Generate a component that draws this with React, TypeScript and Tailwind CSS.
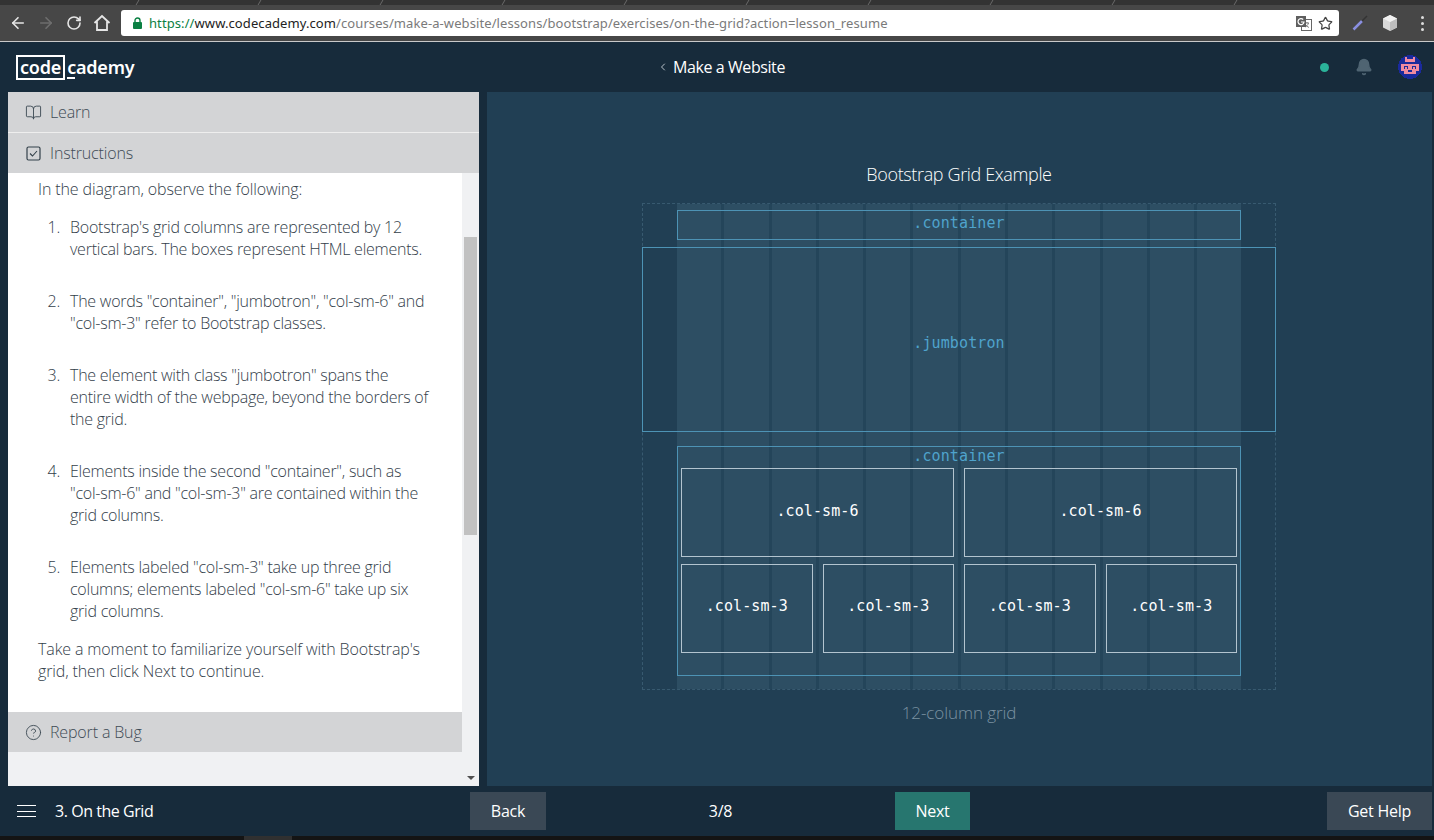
import { ArrowLeft, ArrowRight, RotateCw, Star, Bell, BookOpen, CircleHelp, ChevronLeft } from "lucide-react";

const items = [
  ['Bootstrap\'s grid columns are represented by 12', 'vertical bars. The boxes represent HTML elements.'],
  ['The words "container", "jumbotron", "col-sm-6" and', '"col-sm-3" refer to Bootstrap classes.'],
  ['The element with class "jumbotron" spans the', 'entire width of the webpage, beyond the borders of', 'the grid.'],
  ['Elements inside the second "container", such as', '"col-sm-6" and "col-sm-3" are contained within the', 'grid columns.'],
  ['Elements labeled "col-sm-3" take up three grid', 'columns; elements labeled "col-sm-6" take up six', 'grid columns.'],
];

function Invader() {
  return (
    <svg width="24" height="24" viewBox="0 0 24 24" shapeRendering="crispEdges">
      <circle cx="12" cy="12" r="12" fill="#1a2a9c" />
      <path fill="#f08aa0" d="M7 2h2v2h6V2h2v5H7z M3 9h18v7h-3v3H6v-3H3z" />
      <path fill="#1a2a9c" d="M6 11h4v3H6z M14 11h4v3h-4z M10 15h4v2h-4z" />
      <path fill="#f08aa0" d="M7 12h2v2H7z M15 12h2v2h-2z" />
    </svg>
  );
}

function Cube() {
  return (
    <svg width="18" height="18" viewBox="0 0 18 18">
      <path d="M9 1l7 3.5v9L9 17l-7-3.5v-9z" fill="#d8d8d8" />
      <path d="M9 8l7-3.5v9L9 17z" fill="#bdbdbd" />
      <path d="M9 1l7 3.5L9 8 2 4.5z" fill="#f1f1f1" />
    </svg>
  );
}

function Translate() {
  return (
    <svg width="16" height="15" viewBox="0 0 16 15" className="ml-auto">
      <rect x="5.5" y="3.5" width="10" height="11" fill="#fff" stroke="#666" />
      <path d="M9 7h4M11 6v1M12.5 7c-.5 2-2 3.5-3.5 4M9.5 8.5c.8 1.4 2 2.4 3.5 3" stroke="#666" fill="none" strokeWidth="0.8" />
      <rect x="0" y="0" width="10" height="11" fill="#5f5f5f" />
      <path d="M7.2 3.5A3 3 0 1 0 8 6H5" stroke="#fff" fill="none" strokeWidth="1.2" />
    </svg>
  );
}

function Col6() {
  return (
    <div className="h-[89px] border border-[#b3c4cf] flex items-center justify-center text-white text-[15px] tracking-[0.1px] pb-[3px]">.col-sm-6</div>
  );
}

function Col3() {
  return (
    <div className="h-[89px] border border-[#b3c4cf] flex items-center justify-center text-white text-[15px] tracking-[0.1px] pb-[5px]">.col-sm-3</div>
  );
}

export default function App() {
  return (
    <div className="w-[1434px] h-[840px] overflow-hidden flex flex-col bg-[#172b3b] text-white" style={{ fontFamily: '"Open Sans", sans-serif' }}>
      {/* tab strip */}
      <div className="h-[5px] bg-[#333333] flex pl-[16px] shrink-0">
        {Array.from({ length: 10 }).map((_, i) => (
          <div key={i} className="w-[122px] h-full border-r border-[#6b6b6b] -skew-x-[30deg]" />
        ))}
      </div>
      {/* toolbar */}
      <div className="h-[37px] bg-[#474747] border-b border-[#c9c9c9] flex items-center shrink-0 pl-[9px] pr-[8px]">
        <ArrowLeft size={18} strokeWidth={2.2} className="text-[#e6e6e6]" />
        <ArrowRight size={18} strokeWidth={2.2} className="text-[#6e6e6e] ml-[10px]" />
        <RotateCw size={16} strokeWidth={2.4} className="text-[#e6e6e6] ml-[11px]" />
        <svg width="18" height="18" viewBox="0 0 18 18" className="ml-[11px]">
          <path d="M1.5 9L9 2l7.5 7M4 7.5V16h10V7.5" fill="none" stroke="#e6e6e6" strokeWidth="1.8" />
        </svg>
        <div className="ml-[10px] h-[26px] w-[1218px] bg-white rounded-[3px] flex items-center pl-[10px] pr-[6px] text-[13px] tracking-[0.09px] text-[#7a7a7a]" style={{ fontFamily: '"Noto Sans", sans-serif' }}>
          <svg width="11" height="12" viewBox="0 0 11 12" className="mr-[6px] ml-[1px]">
            <path d="M3 5V3.5a2.5 2.5 0 0 1 5 0V5" fill="none" stroke="#0b8043" strokeWidth="1.4" />
            <rect x="1" y="5" width="9" height="7" rx="1" fill="#0b8043" />
          </svg>
          <span className="pt-[1px] text-[#0b8043]">https://</span>
          <span className="pt-[1px] text-[#222222]">www.codecademy.com</span>
          <span className="pt-[1px]">/courses/make-a-website/lessons/bootstrap/exercises/on-the-grid?action=lesson_resume</span>
          <Translate />
          <Star size={15} strokeWidth={2} className="ml-[6px] text-[#444444]" />
        </div>
        <svg width="16" height="16" viewBox="0 0 16 16" className="ml-[13px]">
          <path d="M1.5 14.5L10 6" stroke="#8a8fe0" strokeWidth="2.5" />
          <path d="M10 6l5-5" stroke="#333333" strokeWidth="1.5" />
        </svg>
        <div className="ml-[13px]"><Cube /></div>
        <div className="ml-[22px] flex flex-col gap-[3px]">
          <div className="w-[3px] h-[3px] rounded-full bg-[#dddddd]" />
          <div className="w-[3px] h-[3px] rounded-full bg-[#dddddd]" />
          <div className="w-[3px] h-[3px] rounded-full bg-[#dddddd]" />
        </div>
      </div>
      {/* header */}
      <header className="h-[50px] shrink-0 flex items-center pl-[16px] pr-[12px] relative">
        <div className="flex items-center text-[18px] font-semibold leading-none w-[119px] tracking-[-0.2px]" style={{ fontFamily: '"Noto Sans", sans-serif' }}>
          <span className="border-2 border-white px-[2px] h-[25px] flex items-center">code</span>
          <span className="ml-[2px] relative">
            cademy
            <span className="absolute left-0 bottom-[-3px] w-[8px] h-[2px] bg-white" />
          </span>
        </div>
        <div className="flex-1 flex items-center justify-center pr-[13px] text-[16px] tracking-[-0.42px]">
          <ChevronLeft size={12} className="text-[#b8c2ca] mr-[4px]" />
          <span>Make a Website</span>
        </div>
        <div className="w-[9px] h-[9px] rounded-full bg-[#2bb39a] mr-[26px]" />
        <Bell size={18} fill="#4f6472" className="text-[#4f6472] mr-[25px]" />
        <Invader />
      </header>
      {/* main */}
      <main className="h-[694px] shrink-0 flex pl-[8px] pr-[2px] gap-[8px]">
        <aside className="w-[471px] flex flex-col bg-[#f0f1f3] text-[#3e4b55]">
          <div className="h-[41px] shrink-0 bg-[#d3d4d6] border-b border-[#eeeeee] flex items-center pl-[17px] gap-[8px] text-[16px] tracking-[-0.15px] font-light">
            <BookOpen size={17} strokeWidth={1.3} />
            <span>Learn</span>
          </div>
          <div className="h-[40px] shrink-0 bg-[#d3d4d6] flex items-center pl-[18px] gap-[9px] text-[16px] tracking-[-0.15px] font-light">
            <svg width="15" height="15" viewBox="0 0 15 15">
              <rect x="1" y="1" width="13" height="13" rx="1.5" fill="none" stroke="#33404a" strokeWidth="1.2" />
              <path d="M4 7.5l2.5 2.5L11 5" fill="none" stroke="#33404a" strokeWidth="1.1" />
            </svg>
            <span>Instructions</span>
          </div>
          <div className="flex-1 flex min-h-0">
            <div className="w-[454px] flex flex-col">
              <div className="h-[539px] bg-white pt-[5px] pl-[30px] text-[16px] leading-[22px] tracking-[-0.12px] font-light text-[#33404a]">
                <p>In the diagram, observe the following:</p>
                <ol className="mt-[16px] tracking-[-0.24px]">
                  {items.map((lines, i) => (
                    <li key={i} className="flex mb-[30px] last:mb-[16px]">
                      <span className="w-[22px] text-right shrink-0">{i + 1}.</span>
                      <span className="ml-[10px] whitespace-nowrap">
                        {lines.map((l, j) => (
                          <span key={j} className="block">{l}</span>
                        ))}
                      </span>
                    </li>
                  ))}
                </ol>
                <p>Take a moment to familiarize yourself with Bootstrap's<br />grid, then click Next to continue.</p>
              </div>
              <div className="h-[40px] shrink-0 bg-[#d3d4d6] flex items-center pl-[17px] gap-[8px] text-[16px] tracking-[-0.15px] font-light">
                <CircleHelp size={17} strokeWidth={1.3} />
                <span>Report a Bug</span>
              </div>
            </div>
            <div className="w-[17px] relative">
              <div className="mt-[64px] mx-[2px] h-[298px] bg-[#c1c1c1]" />
              <div className="absolute bottom-[6px] left-[5px] border-x-[4px] border-x-transparent border-t-[4px] border-t-[#505050]" />
            </div>
          </div>
        </aside>
        <section className="flex-1 bg-[#213f54] flex flex-col items-center pt-[70px] pr-[1px]">
          <h2 className="text-[18px] leading-[24px] font-light tracking-[-0.36px] text-white">Bootstrap Grid Example</h2>
          <div className="relative mt-[17px] w-[634px] h-[487px] border border-dashed border-[#385a70] pt-[6px]" style={{ fontFamily: '"DejaVu Sans Mono", monospace' }}>
            {/* column underlay */}
            <div className="absolute top-0 bottom-0 left-[34px] w-[564px] flex bg-[#2d4e63]">
              {Array.from({ length: 11 }).map((_, i) => (
                <div key={i} className="w-[47.3px] h-full border-r-[3px] border-[#24455a]" />
              ))}
            </div>
            <div className="relative flex flex-col">
              <div className="mx-[34px] h-[30px] border border-[#4d93b5] flex items-center justify-center text-[15px] tracking-[0.1px] text-[#4fa3cc] pb-[4px]">.container</div>
              <div className="-mx-px mt-[7px] h-[185px] border border-[#4d93b5] flex items-center justify-center text-[15px] tracking-[0.1px] text-[#4fa3cc] pt-[7px]">.jumbotron</div>
              <div className="mt-[14px] mx-[34px] h-[230px] border border-[#4d93b5] px-[3px]">
                <div className="h-[21px] text-[15px] leading-[19px] tracking-[0.1px] text-[#4fa3cc] text-center">.container</div>
                <div className="grid grid-cols-2 gap-[10px]">
                  <Col6 />
                  <Col6 />
                </div>
                <div className="mt-[7px] grid grid-cols-4 gap-[10px]">
                  <Col3 />
                  <Col3 />
                  <Col3 />
                  <Col3 />
                </div>
              </div>
            </div>
          </div>
          <div className="mt-[12px] text-[17px] leading-[22px] font-light tracking-[-0.08px] text-[#7b92a2]">12-column grid</div>
        </section>
      </main>
      {/* footer */}
      <footer className="h-[50px] shrink-0 flex items-center pl-[17px] pr-[2px] text-[16px] tracking-[-0.25px]">
        <svg width="19" height="12" viewBox="0 0 19 12" shapeRendering="crispEdges">
          <path d="M0 .5h19M0 6h19M0 11.5h19" stroke="#fff" strokeWidth="1" />
        </svg>
        <span className="ml-[19px] w-[415px] tracking-[-0.45px]">3. On the Grid</span>
        <button className="w-[76px] h-[38px] bg-[#3a4855]">Back</button>
        <span className="w-[349px] text-center">3/8</span>
        <button className="w-[75px] h-[38px] bg-[#27766f]">Next</button>
        <button className="ml-auto w-[105px] h-[38px] bg-[#3a4855]">Get Help</button>
      </footer>
      <div className="flex-1 bg-[#141414] flex pl-[244px]">
        <div className="w-[48px] bg-[#303030]" />
      </div>
    </div>
  );
}
